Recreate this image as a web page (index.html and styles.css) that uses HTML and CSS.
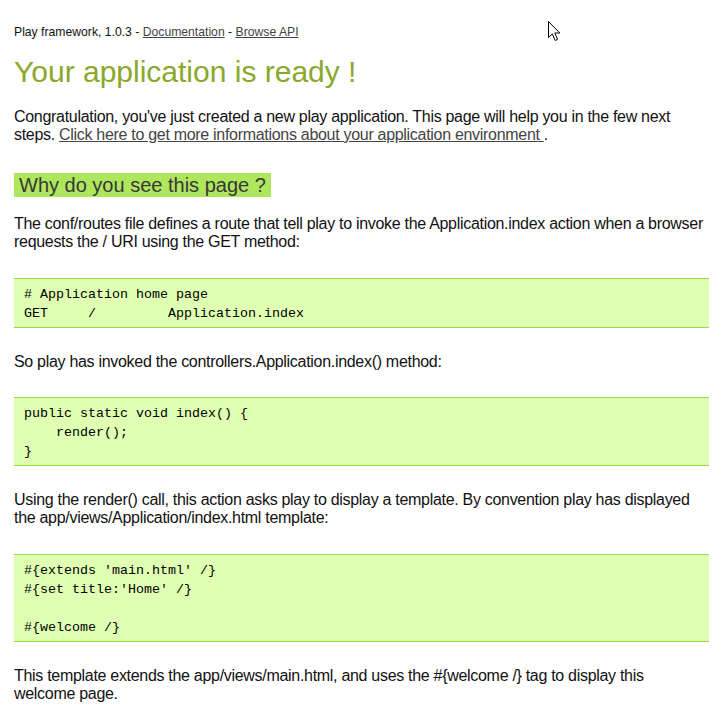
FILE: index.html
```html
<!DOCTYPE html>
<html>
<head>
<meta charset="utf-8">
<title>Your application is ready !</title>
<link rel="stylesheet" href="styles.css">
</head>
<body>
<div class="page">
  <div class="header">Play framework, 1.0.3 - <a href="#">Documentation</a> - <a href="#">Browse API</a></div>
  <h1 class="title">Your application is ready !</h1>
  <p class="text">Congratulation, you've just created a new play application. This page will help you in the few next steps. <a href="#">Click here to get more informations about your application environment </a>.</p>
  <h2 class="section">Why do you see this page ?</h2>
  <p class="text">The conf/routes file defines a route that tell play to invoke the Application.index action when a browser requests the / URI using the GET method:</p>
  <pre class="code"># Application home page
GET     /         Application.index</pre>
  <p class="text">So play has invoked the controllers.Application.index() method:</p>
  <pre class="code">public static void index() {
    render();
}</pre>
  <p class="text">Using the render() call, this action asks play to display a template. By convention play has displayed the app/views/Application/index.html template:</p>
  <pre class="code">#{extends 'main.html' /}
#{set title:'Home' /}

#{welcome /}</pre>
  <p class="text">This template extends the app/views/main.html, and uses the #{welcome /} tag to display this welcome page.</p>
</div>
<svg class="cursor" width="14" height="21" viewBox="0 0 14 21" aria-hidden="true">
  <path d="M0.5 0.5 L0.5 16.5 L4.3 12.9 L7.2 19.5 L9.6 18.4 L6.8 12 L11.8 12 Z" fill="#fff" stroke="#000" stroke-width="1" stroke-linejoin="miter"/>
</svg>
</body>
</html>
```
FILE: styles.css
```css
html, body {
  margin: 0;
  padding: 0;
  background: #fff;
}

body {
  font-family: "Liberation Sans", Arial, sans-serif;
  color: #111;
  position: relative;
}

.page {
  padding: 25px 17px 0 14px;
}

a {
  color: #444;
  text-decoration: underline;
}

.header {
  font-size: 12.2px;
  color: #111;
}

.title {
  font-size: 30px;
  font-weight: normal;
  color: #8aa82a;
  margin: 16px 0 0;
}

.text {
  font-size: 16px;
  letter-spacing: -0.3px;
  margin: 18.5px 3px 18.5px 0;
}

.section {
  width: fit-content;
  margin: 29px 0 18.5px;
  padding: 1px 5px 0;
  font-size: 20px;
  font-weight: normal;
  line-height: 23px;
  color: #383838;
  background: #aee65c;
}

.code {
  font-family: "Liberation Mono", "Courier New", monospace;
  font-size: 13.33px;
  line-height: 19px;
  color: #000;
  background: #dfffb2;
  border-top: 1px solid #97d948;
  border-bottom: 1px solid #97d948;
  margin: 26.7px 0 25px;
  padding: 6px 10px 4px;
}

.cursor {
  position: absolute;
  left: 548px;
  top: 21px;
}
```
